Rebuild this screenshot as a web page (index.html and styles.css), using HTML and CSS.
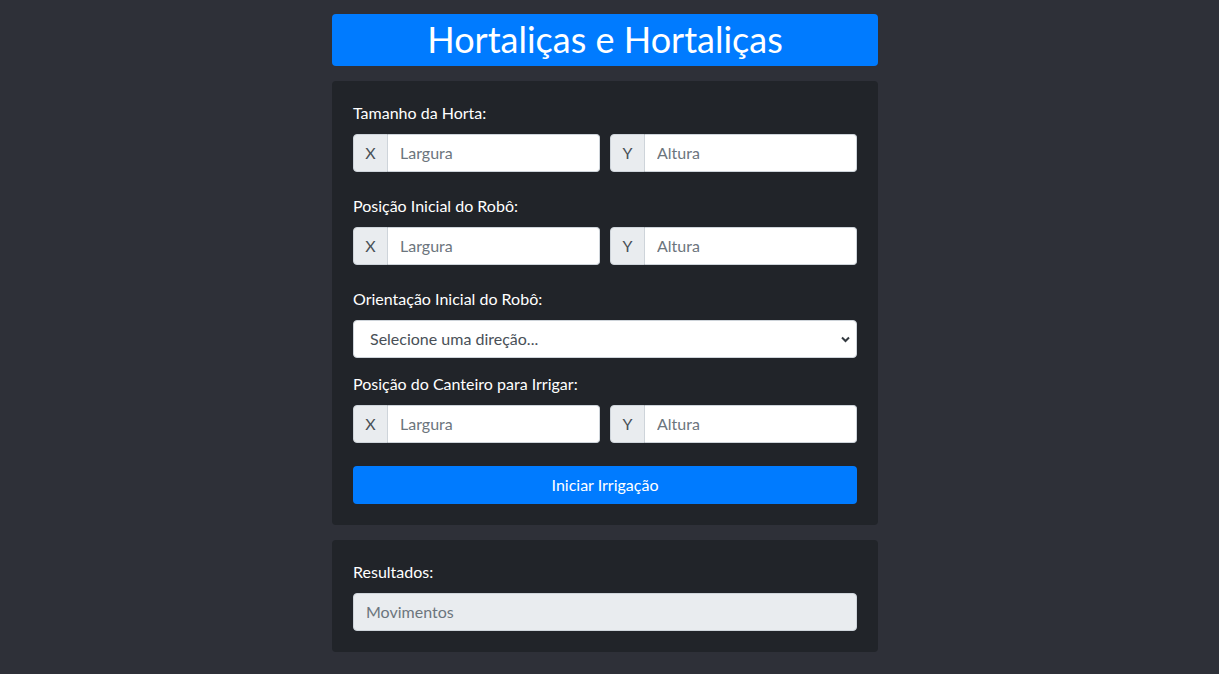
FILE: index.html
```html
<!DOCTYPE html>
<html lang="pt-BR">
<head>
<meta charset="utf-8">
<title>Hortaliças e Hortaliças</title>
<link rel="stylesheet" href="styles.css">
</head>
<body>
<main class="container">
  <header class="title-bar"><h1>Hortaliças e Hortaliças</h1></header>

  <section class="card">
    <div class="group">
      <label class="label">Tamanho da Horta:</label>
      <div class="pair">
        <div class="input-group"><span class="addon">X</span><input class="field" placeholder="Largura"></div>
        <div class="input-group"><span class="addon">Y</span><input class="field" placeholder="Altura"></div>
      </div>
    </div>
    <div class="group">
      <label class="label">Posição Inicial do Robô:</label>
      <div class="pair">
        <div class="input-group"><span class="addon">X</span><input class="field" placeholder="Largura"></div>
        <div class="input-group"><span class="addon">Y</span><input class="field" placeholder="Altura"></div>
      </div>
    </div>
    <div class="group group-select">
      <label class="label">Orientação Inicial do Robô:</label>
      <div class="select">
        <span>Selecione uma direção...</span>
        <svg class="chev" width="9" height="7" viewBox="0 0 9 7"><path d="M1 1.5 L4.5 5 L8 1.5" fill="none" stroke="#343a40" stroke-width="2"/></svg>
      </div>
    </div>
    <div class="group">
      <label class="label">Posição do Canteiro para Irrigar:</label>
      <div class="pair">
        <div class="input-group"><span class="addon">X</span><input class="field" placeholder="Largura"></div>
        <div class="input-group"><span class="addon">Y</span><input class="field" placeholder="Altura"></div>
      </div>
    </div>
    <button class="btn">Iniciar Irrigação</button>
  </section>

  <section class="card">
    <label class="label">Resultados:</label>
    <div class="result">Movimentos</div>
  </section>
</main>
</body>
</html>
```

FILE: styles.css
```css
* { box-sizing: border-box; }
html, body {
  margin: 0;
  background: #2e3038;
  font-family: "Lato", "DejaVu Sans", sans-serif;
  color: #fff;
}
body { padding-right: 9px; }
.container {
  width: 546px;
  margin: 14px auto 0;
  display: flex;
  flex-direction: column;
  gap: 15px;
}
.title-bar {
  background: #007bff;
  border-radius: 4px;
  height: 52px;
  display: flex;
  align-items: center;
  justify-content: center;
}
.title-bar h1 {
  margin: 0;
  font-weight: 400;
  font-size: 36px;
  line-height: 1;
  color: #fff;
  padding-bottom: 2px;
}
.card {
  background: #212429;
  border-radius: 4px;
  padding: 21px;
  display: flex;
  flex-direction: column;
}
.group {
  display: flex;
  flex-direction: column;
  margin-bottom: 23px;
}
.group-select { margin-bottom: 15px; }
.label {
  display: block;
  font-size: 16px;
  line-height: 22px;
  margin-bottom: 10px;
  color: #fff;
}
.pair {
  display: grid;
  grid-template-columns: minmax(0, 1fr) minmax(0, 1fr);
  gap: 10px;
}
.input-group {
  display: flex;
  height: 38px;
  min-width: 0;
}
.addon {
  width: 35px;
  flex: none;
  display: flex;
  align-items: center;
  justify-content: center;
  background: #e9ecef;
  color: #495057;
  border: 1px solid #ced4da;
  border-radius: 4px 0 0 4px;
  font-size: 16px;
  padding-bottom: 2px;
}
.field {
  flex: 1;
  width: 100%;
  min-width: 0;
  border: 1px solid #ced4da;
  border-left: none;
  border-radius: 0 4px 4px 0;
  padding: 0 12px 2px;
  font-family: inherit;
  font-size: 16px;
  color: #495057;
  background: #fff;
  outline: none;
}
.field::placeholder { color: #6c757d; }
.select {
  height: 38px;
  background: #fff;
  border: 1px solid #ced4da;
  border-radius: 4px;
  display: flex;
  align-items: center;
  justify-content: space-between;
  padding: 0 6px 2px 16px;
  color: #495057;
  font-size: 16px;
}
.chev { flex: none; margin-top: 2px; }
.btn {
  height: 38px;
  border: none;
  border-radius: 4px;
  background: #007bff;
  color: #fff;
  font-family: inherit;
  font-size: 16px;
  padding-bottom: 2px;
}
.result {
  height: 38px;
  background: #e9ecef;
  border: 1px solid #ced4da;
  border-radius: 4px;
  display: flex;
  align-items: center;
  padding: 0 12px 2px;
  color: #6c757d;
  font-size: 16px;
}
```
